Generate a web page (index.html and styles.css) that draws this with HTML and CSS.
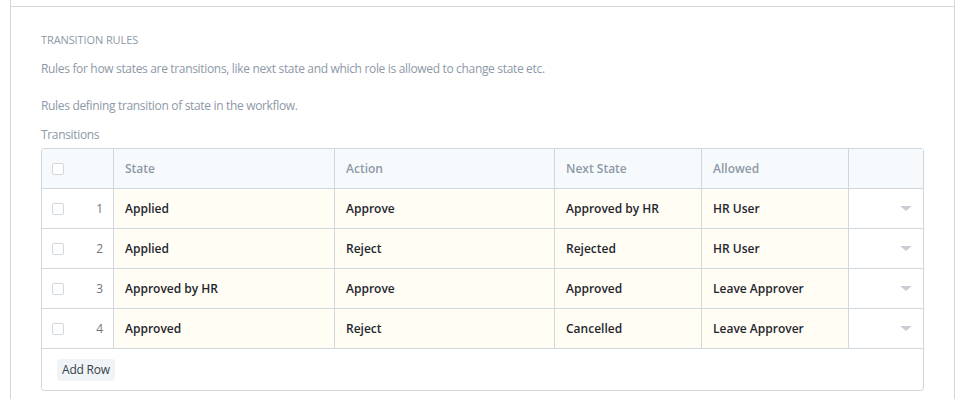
FILE: index.html
```html
<!DOCTYPE html>
<html>
<head>
  <title>Workflow</title>
  <meta charset="UTF-8">
  <link rel="stylesheet" href="styles.css">
</head>
<body>
  <div class="form-page">
    <div class="form-section prev-section"></div>

    <!-- Transition rules section -->
    <div class="form-section">
      <div class="section-head">Transition Rules</div>
      <p class="section-desc">Rules for how states are transitions, like next state and which role is allowed to change state etc.</p>
      <p class="field-desc">Rules defining transition of state in the workflow.</p>
      <div class="control-label">Transitions</div>

      <div class="grid">
        <div class="grid-row grid-heading">
          <div class="cell row-index"><span class="check"></span></div>
          <div class="cell">State</div>
          <div class="cell">Action</div>
          <div class="cell">Next State</div>
          <div class="cell">Allowed</div>
          <div class="cell"></div>
        </div>

        <div class="grid-row">
          <div class="cell row-index"><span class="check"></span><span class="idx">1</span></div>
          <div class="cell bold">Applied</div>
          <div class="cell bold">Approve</div>
          <div class="cell bold">Approved by HR</div>
          <div class="cell bold">HR User</div>
          <div class="cell row-menu"><span class="caret"></span></div>
        </div>
        <div class="grid-row">
          <div class="cell row-index"><span class="check"></span><span class="idx">2</span></div>
          <div class="cell bold">Applied</div>
          <div class="cell bold">Reject</div>
          <div class="cell bold">Rejected</div>
          <div class="cell bold">HR User</div>
          <div class="cell row-menu"><span class="caret"></span></div>
        </div>
        <div class="grid-row">
          <div class="cell row-index"><span class="check"></span><span class="idx">3</span></div>
          <div class="cell bold">Approved by HR</div>
          <div class="cell bold">Approve</div>
          <div class="cell bold">Approved</div>
          <div class="cell bold">Leave Approver</div>
          <div class="cell row-menu"><span class="caret"></span></div>
        </div>
        <div class="grid-row">
          <div class="cell row-index"><span class="check"></span><span class="idx">4</span></div>
          <div class="cell bold">Approved</div>
          <div class="cell bold">Reject</div>
          <div class="cell bold">Cancelled</div>
          <div class="cell bold">Leave Approver</div>
          <div class="cell row-menu"><span class="caret"></span></div>
        </div>

        <div class="grid-footer">
          <button class="btn-add">Add Row</button>
        </div>
      </div>
    </div>
  </div>
</body>
</html>
```

FILE: styles.css
```css
html, body {
  margin: 0;
  background: #fff;
  font-family: "Open Sans", "Noto Sans", sans-serif;
  font-size: 12px;
  color: #36414c;
}

.form-page {
  margin-left: 10px;
  width: 945px;
  min-height: 399px;
  box-sizing: border-box;
  border-left: 1px solid #d1d8dd;
  border-right: 1px solid #d1d8dd;
}
.form-section {
  padding: 25px 30px 0 30px;
  border-top: 1px solid #d1d8dd;
}
.prev-section {
  height: 6px;
  padding: 0;
  border-top: none;
}

.section-head {
  font-size: 11px;
  line-height: 16px;
  text-transform: uppercase;
  color: #8d99a6;
  letter-spacing: -0.1px;
}
.section-desc, .field-desc, .control-label {
  letter-spacing: -0.33px;
}
.section-desc, .field-desc {
  margin: 12px 0 0 0;
  line-height: 18px;
  color: #8d99a6;
}
.field-desc {
  margin-top: 19px;
}
.control-label {
  margin-top: 11px;
  margin-bottom: 4px;
  line-height: 18px;
  color: #8d99a6;
}

/* child table */
.grid {
  border: 1px solid #d1d8dd;
  border-radius: 3px;
}
.grid-row {
  display: grid;
  grid-template-columns: 72px 221px 220px 147px 147px 1fr;
  height: 40px;
  box-sizing: border-box;
  border-bottom: 1px solid #d1d8dd;
  background: #fffdf4;
}
.grid-heading {
  background: #f7fafc;
  color: #8d99a6;
  font-weight: 600;
}
.cell {
  display: flex;
  align-items: center;
  padding: 0 11px;
  border-right: 1px solid #d1d8dd;
  white-space: nowrap;
}
.cell:last-child {
  border-right: none;
}
.bold {
  font-weight: 600;
  color: #1f272e;
}
.row-index {
  background: #fff;
  padding: 0 10px 0 10px;
  justify-content: space-between;
}
.grid-heading .row-index {
  background: transparent;
}
.check {
  width: 10px;
  height: 10px;
  border: 1px solid #d1d8dd;
  border-radius: 2px;
  background: #fff;
}
.idx {
  color: #6c7680;
}
.row-menu {
  background: #fff;
  justify-content: flex-end;
  padding-right: 11px;
}
.caret {
  width: 0;
  height: 0;
  border-left: 6px solid transparent;
  border-right: 6px solid transparent;
  border-top: 5px solid #c8ced3;
}

.grid-footer {
  padding: 10px 15px 9px 15px;
}
.btn-add {
  font-family: inherit;
  font-size: 12px;
  color: #36414c;
  background: #f0f4f7;
  border: none;
  border-radius: 3px;
  padding: 3px 5px;
  line-height: 16px;
  letter-spacing: -0.2px;
}
```
